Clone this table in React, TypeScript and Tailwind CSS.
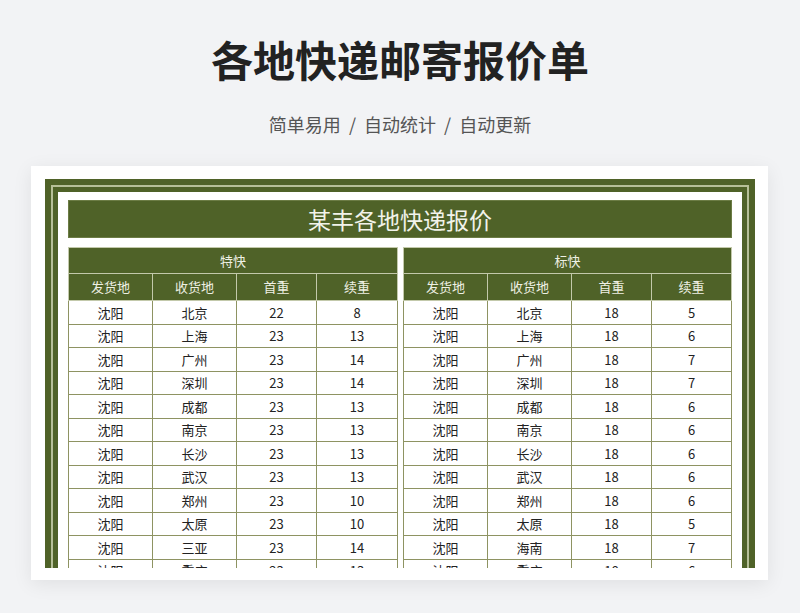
const express = [
  ["北京", "22", "8"],
  ["上海", "23", "13"],
  ["广州", "23", "14"],
  ["深圳", "23", "14"],
  ["成都", "23", "13"],
  ["南京", "23", "13"],
  ["长沙", "23", "13"],
  ["武汉", "23", "13"],
  ["郑州", "23", "10"],
  ["太原", "23", "10"],
  ["三亚", "23", "14"],
  ["重庆", "23", "13"],
  ["西安", "23", "13"],
];

const standard = [
  ["北京", "18", "5"],
  ["上海", "18", "6"],
  ["广州", "18", "7"],
  ["深圳", "18", "7"],
  ["成都", "18", "6"],
  ["南京", "18", "6"],
  ["长沙", "18", "6"],
  ["武汉", "18", "6"],
  ["郑州", "18", "6"],
  ["太原", "18", "5"],
  ["海南", "18", "7"],
  ["重庆", "18", "6"],
  ["西安", "18", "6"],
];

const heads = ["发货地", "收货地", "首重", "续重"];

function PriceTable({
  title,
  rows,
  widths,
}: {
  title: string;
  rows: string[][];
  widths: number[];
}) {
  return (
    <table className="table-fixed border-collapse text-[13px]" style={{ width: widths.reduce((a, b) => a + b, 0) }}>
      <colgroup>
        {widths.map((w, i) => (
          <col key={i} style={{ width: w }} />
        ))}
      </colgroup>
      <thead>
        <tr className="h-[26px] bg-[#4f6228] text-[#eef0e4]">
          <th colSpan={4} className="border border-[#c3c9ab] font-normal">
            {title}
          </th>
        </tr>
        <tr className="h-[27px] bg-[#4f6228] text-[#eef0e4]">
          {heads.map((h) => (
            <th key={h} className="border border-[#c3c9ab] font-normal">
              {h}
            </th>
          ))}
        </tr>
      </thead>
      <tbody>
        {rows.map((r, i) => (
          <tr key={i} className="h-[23.5px] bg-white text-[#222]">
            <td className="border border-[#8e9362] text-center">沈阳</td>
            <td className="border border-[#8e9362] text-center">{r[0]}</td>
            <td className="border border-[#8e9362] text-center">{r[1]}</td>
            <td className="border border-[#8e9362] text-center">{r[2]}</td>
          </tr>
        ))}
      </tbody>
    </table>
  );
}

export default function App() {
  return (
    <div
      className="h-[613px] w-[800px] overflow-hidden bg-[#f2f3f5] pt-[38px]"
      style={{ fontFamily: '"Noto Sans CJK SC", "Noto Sans", sans-serif' }}
    >
      <h1 className="text-center text-[42px] font-bold leading-[42px] text-[#222]">
        各地快递邮寄报价单
      </h1>
      <p className="mt-[32px] text-center text-[18px] leading-[24px] text-[#555]">
        简单易用 &nbsp;/&nbsp; 自动统计 &nbsp;/&nbsp; 自动更新
      </p>
      <div className="ml-[31px] mt-[30px] h-[414px] w-[737px] bg-white pb-[12px] pl-[14px] pr-[13px] pt-[13px] shadow-[0_4px_18px_rgba(0,0,0,0.08)]">
        <div className="h-full overflow-hidden bg-[#4f6228] p-[6px]">
          <div className="border-2 border-[#b6bf98] bg-[#4f6228] p-[5px]">
            <div className="flex flex-col gap-[9px] bg-white px-[10px] pb-[10px] pt-[8px]">
              <div className="flex h-[38px] items-center justify-center border border-[#6c7c45] bg-[#4f6228] text-[23px] text-[#f2f3ea]">
                某丰各地快递报价
              </div>
              <div className="flex gap-[5px]">
                <PriceTable title="特快" rows={express} widths={[84, 84, 80, 81]} />
                <PriceTable title="标快" rows={standard} widths={[84, 84, 80, 80]} />
              </div>
            </div>
          </div>
        </div>
      </div>
    </div>
  );
}
